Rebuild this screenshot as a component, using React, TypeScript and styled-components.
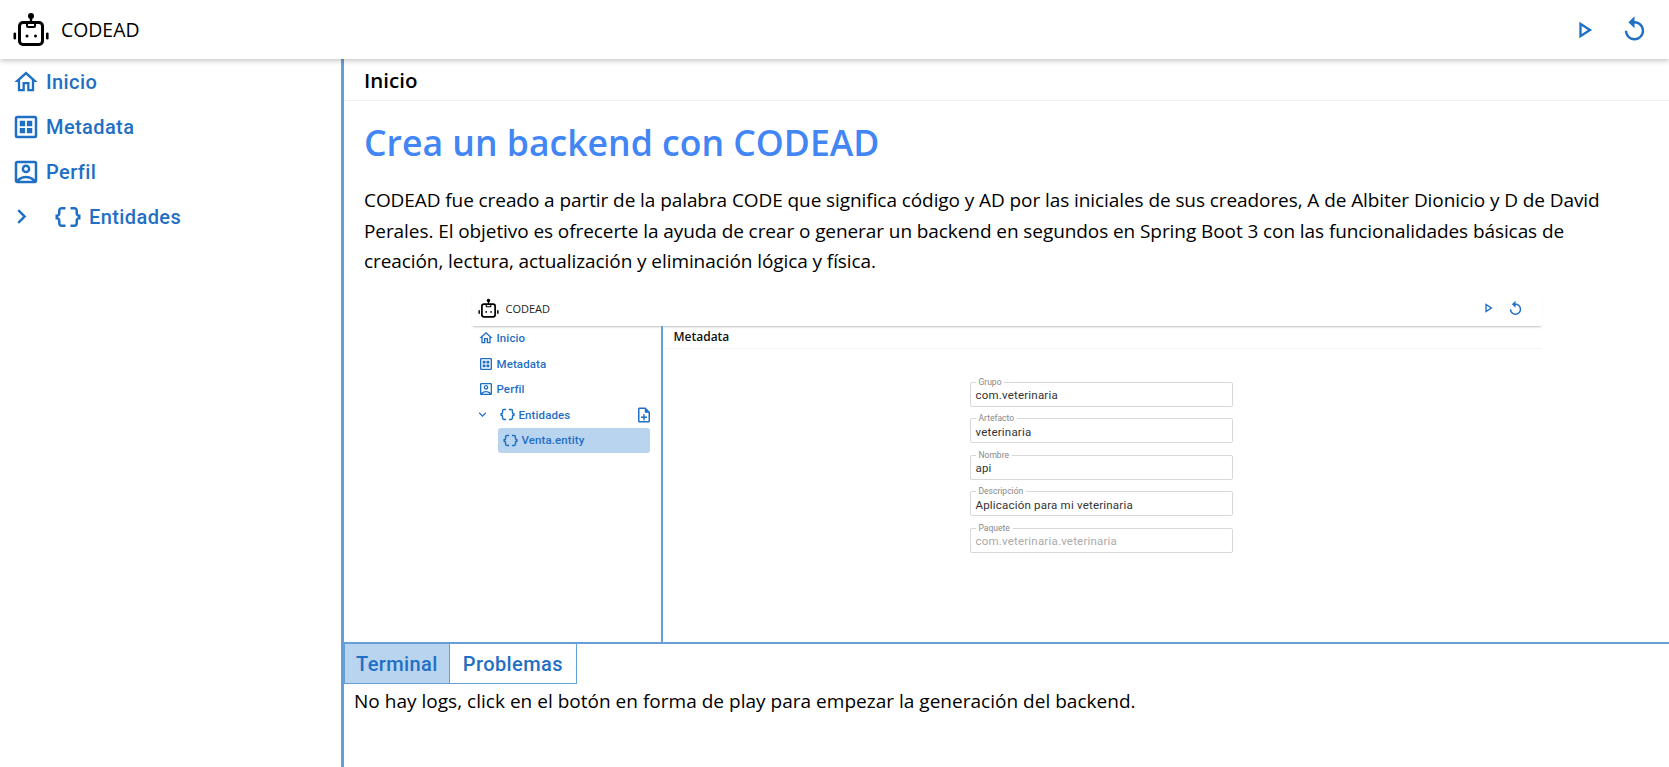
import React from "react";
import styled, { createGlobalStyle } from "styled-components";
import {
  MdChevronRight,
  MdDataObject,
  MdExpandMore,
  MdOutlineAccountBox,
  MdOutlineHome,
  MdOutlineNoteAdd,
  MdOutlinePlayArrow,
  MdReplay,
} from "react-icons/md";

const BLUE = "#1f6fc5";
const LINE = "#669fd8";

const GlobalStyle = createGlobalStyle`
  html, body { margin: 0; padding: 0; height: 100%; background: #fff; }
  #root { height: 100%; }
  * { box-sizing: border-box; }
`;

function RobotLogo({ size }: { size: number }) {
  return (
    <svg width={size} height={size} viewBox="0 0 40 40" fill="#000">
      <circle cx="20" cy="6" r="3" />
      <rect x="18.8" y="6" width="2.4" height="7" />
      <rect x="8.5" y="12.5" width="23" height="22" rx="3.5" fill="none" stroke="#000" strokeWidth="3" />
      <path d="M16 12v4a1 1 0 0 0 1 1h6a1 1 0 0 0 1-1v-4" fill="none" stroke="#000" strokeWidth="2" />
      <circle cx="16" cy="26" r="1.5" />
      <circle cx="24.5" cy="26" r="1.5" />
      <rect x="2.5" y="22.5" width="2.6" height="7" rx="1.3" />
      <rect x="35" y="22.5" width="2.6" height="7" rx="1.3" />
    </svg>
  );
}

function GridBoxIcon({ size }: { size: number }) {
  return (
    <svg width={size} height={size} viewBox="0 0 24 24" fill="currentColor">
      <path d="M19 3H5a2 2 0 0 0-2 2v14a2 2 0 0 0 2 2h14a2 2 0 0 0 2-2V5a2 2 0 0 0-2-2zm0 16H5V5h14v14z" />
      <path d="M7 7h4.3v4.3H7zM12.7 7H17v4.3h-4.3zM7 12.7h4.3V17H7zM12.7 12.7H17V17h-4.3z" />
    </svg>
  );
}

function ShotField({ label, value, disabled }: { label: string; value: string; disabled?: boolean }) {
  return (
    <FieldBox>
      <FieldLegend>{label}</FieldLegend>
      <FieldValue $disabled={disabled}>{value}</FieldValue>
    </FieldBox>
  );
}

export default function App() {
  return (
    <Page>
      <GlobalStyle />
      <TopBar>
        <Brand>
          <RobotLogo size={40} />
          <BrandName>CODEAD</BrandName>
        </Brand>
        <TopActions>
          <MdOutlinePlayArrow size={28} />
          <MdReplay size={29} />
        </TopActions>
      </TopBar>

      <Workspace>
        <Sidebar>
          <NavItem>
            <MdOutlineHome size={28} />
            <NavLabel>Inicio</NavLabel>
          </NavItem>
          <NavItem>
            <BoxIcon>
              <GridBoxIcon size={30} />
            </BoxIcon>
            <NavLabel>Metadata</NavLabel>
          </NavItem>
          <NavItem>
            <BoxIcon>
              <MdOutlineAccountBox size={30} />
            </BoxIcon>
            <NavLabel>Perfil</NavLabel>
          </NavItem>
          <NavItem>
            <ChevronSlot>
              <MdChevronRight size={29} />
            </ChevronSlot>
            <BracesSlot>
              <MdDataObject size={30} />
            </BracesSlot>
            <NavLabel>Entidades</NavLabel>
          </NavItem>
        </Sidebar>

        <Main>
          <PageTitle>Inicio</PageTitle>
          <Content>
            <Heading>Crea un backend con CODEAD</Heading>
            <Paragraph>
              CODEAD fue creado a partir de la palabra CODE que significa código y AD por las
              iniciales de sus creadores, A de Albiter Dionicio y D de David Perales. El objetivo
              es ofrecerte la ayuda de crear o generar un backend en segundos en Spring Boot 3 con
              las funcionalidades básicas de creación, lectura, actualización y eliminación lógica
              y física.
            </Paragraph>

            <Shot>
              <ShotBar>
                <ShotBrand>
                  <RobotLogo size={23} />
                  <ShotBrandName>CODEAD</ShotBrandName>
                </ShotBrand>
                <ShotActions>
                  <MdOutlinePlayArrow size={16} />
                  <MdReplay size={17} />
                </ShotActions>
              </ShotBar>
              <ShotBody>
                <ShotSide>
                  <ShotNav>
                    <MdOutlineHome size={16} />
                    <span>Inicio</span>
                  </ShotNav>
                  <ShotNav>
                    <GridBoxIcon size={16} />
                    <span>Metadata</span>
                  </ShotNav>
                  <ShotNav>
                    <MdOutlineAccountBox size={16} />
                    <span>Perfil</span>
                  </ShotNav>
                  <ShotNav>
                    <ShotChevron>
                      <MdExpandMore size={15} />
                    </ShotChevron>
                    <ShotBraces>
                      <MdDataObject size={17} />
                    </ShotBraces>
                    <span>Entidades</span>
                    <ShotAdd>
                      <MdOutlineNoteAdd size={18} />
                    </ShotAdd>
                  </ShotNav>
                  <ShotEntity>
                    <MdDataObject size={17} />
                    <span>Venta.entity</span>
                  </ShotEntity>
                </ShotSide>
                <ShotMain>
                  <ShotTitle>Metadata</ShotTitle>
                  <ShotForm>
                    <ShotField label="Grupo" value="com.veterinaria" />
                    <ShotField label="Artefacto" value="veterinaria" />
                    <ShotField label="Nombre" value="api" />
                    <ShotField label="Descripción" value="Aplicación para mi veterinaria" />
                    <ShotField label="Paquete" value="com.veterinaria.veterinaria" disabled />
                  </ShotForm>
                </ShotMain>
              </ShotBody>
            </Shot>
          </Content>

          <BottomPanel>
            <Tabs>
              <Tab $active>Terminal</Tab>
              <Tab>Problemas</Tab>
            </Tabs>
            <LogText>
              No hay logs, click en el botón en forma de play para empezar la generación del backend.
            </LogText>
          </BottomPanel>
        </Main>
      </Workspace>
    </Page>
  );
}

const Page = styled.div`
  height: 767px;
  display: flex;
  flex-direction: column;
  overflow: hidden;
  font-family: "Open Sans", "Liberation Sans", sans-serif;
  color: #000;
`;

const TopBar = styled.header`
  position: relative;
  z-index: 2;
  height: 59px;
  flex: none;
  display: flex;
  align-items: center;
  justify-content: space-between;
  padding: 0 20px 0 11px;
  background: #fff;
  box-shadow: 0 2px 5px rgba(0, 0, 0, 0.22);
`;

const Brand = styled.div`
  display: flex;
  align-items: center;
  gap: 10px;
`;

const BrandName = styled.span`
  font-size: 19.4px;
`;

const TopActions = styled.div`
  display: flex;
  align-items: center;
  gap: 22px;
  color: ${BLUE};
`;

const Workspace = styled.div`
  flex: 1;
  display: flex;
  min-height: 0;
`;

const Sidebar = styled.nav`
  width: 341px;
  flex: none;
  padding: 0 12px;
`;

const NavItem = styled.div`
  height: 45px;
  display: flex;
  align-items: center;
  gap: 6px;
  color: ${BLUE};
  font-family: Roboto, sans-serif;
  font-weight: 500;
  font-size: 20px;
  letter-spacing: 0.4px;
`;

const NavLabel = styled.span`
  line-height: 1;
`;

const BoxIcon = styled.span`
  display: flex;
  margin: 0 -1px;
`;

const ChevronSlot = styled.span`
  display: flex;
  margin-left: -5px;
`;

const BracesSlot = styled.span`
  display: flex;
  margin-left: 11px;
`;

const Main = styled.main`
  flex: 1;
  min-width: 0;
  display: flex;
  flex-direction: column;
  border-left: 3px solid ${LINE};
`;

const PageTitle = styled.div`
  height: 42px;
  flex: none;
  display: flex;
  align-items: center;
  padding-left: 20px;
  font-size: 20.5px;
  font-weight: 600;
  border-bottom: 1px solid #f0f0f0;
`;

const Content = styled.section`
  flex: 1;
  min-height: 0;
  overflow: hidden;
  padding: 0 20px;
`;

const Heading = styled.h1`
  margin: 17px 0 0;
  font-size: 35.6px;
  line-height: 48px;
  font-weight: 600;
  color: #4285f4;
`;

const Paragraph = styled.p`
  max-width: 1270px;
  margin: 19px 0 0;
  font-size: 19px;
  letter-spacing: -0.08px;
  line-height: 30.5px;
`;

const Shot = styled.div`
  width: 1070px;
  margin: 16px auto 0;
  color: ${BLUE};
`;

const ShotBar = styled.div`
  height: 33px;
  display: flex;
  align-items: center;
  justify-content: space-between;
  padding: 0 18px 2px 5px;
  box-shadow: 0 2px 2px -1px rgba(0, 0, 0, 0.25);
`;

const ShotBrand = styled.div`
  display: flex;
  align-items: center;
  gap: 6px;
`;

const ShotBrandName = styled.span`
  color: #222;
  font-size: 11px;
`;

const ShotActions = styled.div`
  display: flex;
  align-items: center;
  gap: 11px;
`;

const ShotBody = styled.div`
  display: flex;
  height: 400px;
`;

const ShotSide = styled.div`
  width: 189px;
  flex: none;
  padding: 0 11px 0 6px;
`;

const ShotNav = styled.div`
  height: 25.5px;
  display: flex;
  align-items: center;
  gap: 3px;
  font-family: Roboto, sans-serif;
  font-weight: 500;
  font-size: 11.5px;
  letter-spacing: 0.1px;
`;

const ShotChevron = styled.span`
  display: flex;
  margin-left: -3px;
`;

const ShotBraces = styled.span`
  display: flex;
  margin-left: 6px;
`;

const ShotAdd = styled.span`
  display: flex;
  margin-left: auto;
  margin-right: -3px;
`;

const ShotEntity = styled(ShotNav)`
  margin-left: 20px;
  padding-left: 4px;
  background: #b9d4ef;
  border-radius: 3px;
`;

const ShotMain = styled.div`
  flex: 1;
  border-left: 2px solid ${LINE};
`;

const ShotTitle = styled.div`
  height: 23px;
  display: flex;
  align-items: center;
  padding-left: 11px;
  color: #111;
  font-size: 12px;
  font-weight: 600;
  border-bottom: 1px solid #f4f4f4;
`;

const ShotForm = styled.div`
  width: 263px;
  margin: 33px 0 0 307px;
  display: flex;
  flex-direction: column;
  gap: 11.5px;
`;

const FieldBox = styled.div`
  position: relative;
  height: 25px;
  display: flex;
  align-items: center;
  padding: 2px 5px 0;
  border: 1px solid #d8d8d8;
  border-radius: 2px;
`;

const FieldLegend = styled.span`
  position: absolute;
  top: -6px;
  left: 5px;
  padding: 0 3px;
  background: #fff;
  color: #888;
  font-family: Roboto, sans-serif;
  font-size: 8.5px;
  line-height: 10px;
`;

const FieldValue = styled.span<{ $disabled?: boolean }>`
  color: ${(p) => (p.$disabled ? "#aaa" : "#333")};
  font-family: Roboto, sans-serif;
  font-size: 11.5px;
  letter-spacing: 0.2px;
`;

const BottomPanel = styled.section`
  height: 125px;
  flex: none;
  border-top: 2px solid ${LINE};
  background: #fff;
`;

const Tabs = styled.div`
  display: flex;
  height: 40px;
`;

const Tab = styled.div<{ $active?: boolean }>`
  display: flex;
  align-items: center;
  padding: 1px ${(p) => (p.$active ? "11px" : "13px")} 0;
  border: 1px solid ${LINE};
  border-top: 0;
  margin-right: -1px;
  background: ${(p) => (p.$active ? "#b9d4ef" : "#fff")};
  color: ${BLUE};
  font-family: Roboto, sans-serif;
  font-weight: 500;
  font-size: 20px;
  letter-spacing: 0.4px;
`;

const LogText = styled.p`
  margin: 3px 0 0 10px;
  font-size: 19px;
  letter-spacing: 0.02px;
  line-height: 28px;
`;
